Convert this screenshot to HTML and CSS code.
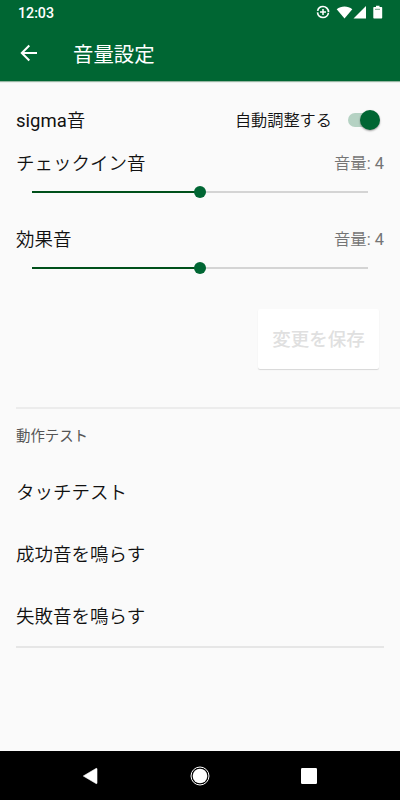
FILE: index.html
```html
<!DOCTYPE html>
<html lang="ja">
<head>
  <meta charset="UTF-8" />
  <meta name="viewport" content="width=device-width, initial-scale=1.0"/>
  <title>音量設定</title>
  <link rel="stylesheet" href="styles.css">
</head>
<body>

  <!-- Status bar and title -->
  <header class="app-header">
    <div class="status-bar">
      <span class="clock">12:03</span>
      <svg class="status-icons" width="68" height="16" viewBox="0 0 68 16">
        <circle cx="7" cy="8" r="5.5" fill="none" stroke="#fff" stroke-width="1.7" stroke-dasharray="15.6 1.68" stroke-dashoffset="-.8"/>
        <path d="M7 5v6M4 8h6" stroke="#fff" stroke-width="1.5"/>
        <path d="M20.7 5.2C25 1.5 32 1.5 36.3 5.2L28.5 14.5z" fill="#fff"/>
        <path d="M50 2v12.5H37.5z" fill="#fff"/>
        <path d="M58 3h2V1.8h3.5V3h2q.7 0 .7.7v10.1q0 .7-.7.7H58q-.7 0-.7-.7V3.7q0-.7.7-.7z" fill="#fff"/>
        <path d="M59 5.3h5" stroke="#6da283" stroke-width="1"/>
      </svg>
    </div>
    <div class="title-bar">
      <svg class="back-icon" width="18" height="18" viewBox="0 0 18 18">
        <path d="M17 9H2M9.3 1.5L1.8 9l7.5 7.5" fill="none" stroke="#fff" stroke-width="2"/>
      </svg>
      <h1>音量設定</h1>
    </div>
  </header>

  <main>
    <!-- Volume settings -->
    <section class="volumes">
      <div class="row">
        <span class="label"><span class="latin">sigma</span>音</span>
        <span class="auto">自動調整する</span>
        <span class="switch"><span class="switch-thumb"></span></span>
      </div>

      <div class="row volume-row">
        <span class="label">チェックイン音</span>
        <span class="value">音量<span class="latin">: 4</span></span>
      </div>
      <div class="slider"><span class="slider-fill"></span><span class="slider-thumb"></span></div>

      <div class="row volume-row second">
        <span class="label">効果音</span>
        <span class="value">音量<span class="latin">: 4</span></span>
      </div>
      <div class="slider"><span class="slider-fill"></span><span class="slider-thumb"></span></div>

      <button class="save-btn" disabled>変更を保存</button>
    </section>

    <!-- Sound tests -->
    <section class="tests">
      <h2>動作テスト</h2>
      <ul>
        <li>タッチテスト</li>
        <li>成功音を鳴らす</li>
        <li>失敗音を鳴らす</li>
      </ul>
    </section>
  </main>

  <!-- System navigation -->
  <nav class="nav-bar">
    <svg width="20" height="20" viewBox="0 0 20 20">
      <path d="M3.3 10L16 2.5q1-.5 1 .5v14q0 1-1 .5z" fill="#fff" stroke="#fff" stroke-width=".6"/>
    </svg>
    <svg width="20" height="20" viewBox="0 0 20 20">
      <circle cx="10" cy="10" r="7.3" fill="#fff"/>
      <circle cx="10" cy="10" r="9" fill="none" stroke="#fff" stroke-width="1"/>
    </svg>
    <svg width="20" height="20" viewBox="0 0 20 20">
      <rect x="2" y="2" width="16" height="16" rx="1.2" fill="#fff"/>
    </svg>
  </nav>

</body>
</html>
```
FILE: styles.css
```css
* {
  box-sizing: border-box;
}

/* Page base styles */
body {
  margin: 0;
  height: 800px;
  display: flex;
  flex-direction: column;
  overflow: hidden;
  font-family: Roboto, "Noto Sans CJK JP", sans-serif;
  background: #fafafa;
  color: #111;
}

/* Header */
.app-header {
  height: 81px;
  background: #006633;
  color: #fff;
  box-shadow: 0 1px 1px rgba(0, 80, 30, 0.4);
}

.status-bar {
  height: 26px;
  padding: 0 16px 0 18px;
  display: flex;
  align-items: center;
  justify-content: space-between;
}

.clock {
  font-size: 14.2px;
  font-weight: 500;
}

.status-icons {
  margin-top: -2px;
}

.title-bar {
  height: 54px;
  padding-left: 20px;
  display: flex;
  align-items: center;
  gap: 35px;
}

h1 {
  margin: 0;
  padding-top: 4px;
  font-size: 20.4px;
  font-weight: 400;
  line-height: 30px;
}

main {
  flex: 1;
}

/* Volume settings */
.volumes {
  height: 326px;
  padding: 20px 16px 0;
  display: flex;
  flex-direction: column;
}

.row {
  height: 38px;
  display: flex;
  align-items: center;
  line-height: 28px;
}

.label {
  flex: 1;
  padding-top: 1px;
  font-size: 18.5px;
  font-weight: 350;
}

.latin {
  font-weight: 400;
}

.auto {
  padding-top: 2px;
  font-size: 16.2px;
  font-weight: 350;
}

.switch {
  width: 29px;
  height: 14px;
  margin: 0 7px 0 16px;
  border-radius: 7px;
  display: flex;
  justify-content: flex-end;
  align-items: center;
  background: #b5d2c3;
}

.switch-thumb {
  width: 20px;
  height: 20px;
  flex: none;
  margin-right: -3px;
  border-radius: 50%;
  background: #006633;
  box-shadow: 0 1px 2px rgba(0, 0, 0, 0.4);
}

.volume-row {
  height: 48px;
}

.value {
  padding-top: 1px;
  font-size: 16.4px;
  color: #757575;
  font-weight: 350;
}

.second {
  margin-top: 18px;
}

/* Slider track and thumb */
.slider {
  height: 10px;
  margin: 0 16px;
  display: flex;
  align-items: center;
  background: linear-gradient(#d4d4d4, #d4d4d4) center / 100% 2px no-repeat;
}

.slider-fill {
  width: 50%;
  height: 2px;
  background: #00501a;
}

.slider-thumb {
  width: 12px;
  height: 12px;
  margin-left: -6px;
  border-radius: 50%;
  background: #006633;
}

/* Save button */
.save-btn {
  width: 121px;
  height: 60px;
  margin: 36px 5px 0 0;
  padding: 0 0 3px;
  align-self: flex-end;
  border: none;
  border-radius: 2px;
  background: #fff;
  color: #e0e0e0;
  font-family: inherit;
  font-size: 18.5px;
  font-weight: 500;
  box-shadow: 0 1px 1px rgba(0, 0, 0, 0.14);
}

/* Sound tests */
.tests {
  margin-left: 16px;
  border-top: 2px solid #ececec;
}

h2 {
  margin: 0;
  height: 52px;
  font-size: 14.4px;
  font-weight: 400;
  line-height: 55px;
  color: #555;
}

ul {
  height: 187px;
  margin: 0 16px 0 0;
  padding: 0;
  list-style: none;
  border-bottom: 2px solid #e6e6e6;
}

li {
  height: 62px;
  font-size: 18.5px;
  font-weight: 350;
  line-height: 64px;
}

/* System navigation */
.nav-bar {
  height: 49px;
  padding: 0 81px 0 80px;
  display: flex;
  align-items: center;
  justify-content: space-between;
  background: #000;
}
```
